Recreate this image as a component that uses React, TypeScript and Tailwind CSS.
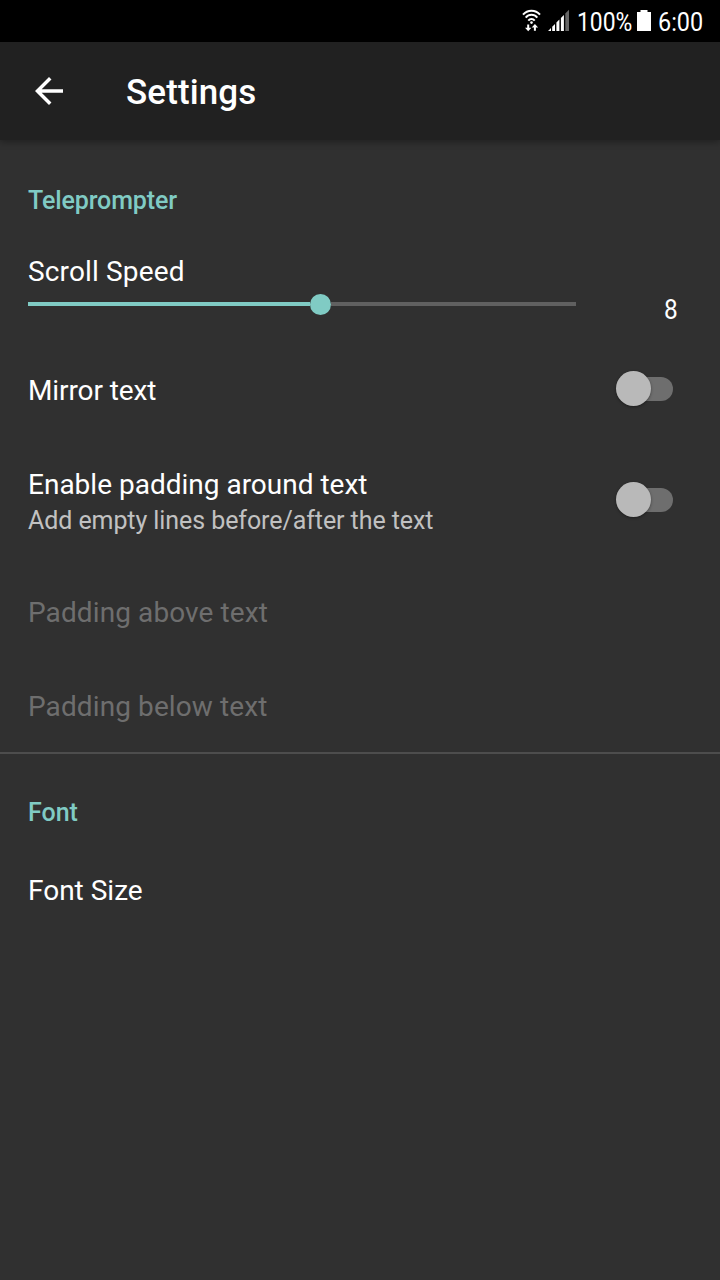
import React from "react";

function StatusBar() {
  return (
    <div className="flex h-[42px] shrink-0 items-center bg-black pl-[521px] text-[26px] leading-[42px] text-white">
      <svg width="50" height="42" viewBox="0 0 50 42" className="shrink-0">
        <g fill="none" stroke="#fff" strokeWidth="2">
          <path d="M2 14.6C6.5 9.4 14.5 9.4 19 14.6" />
          <path d="M4.7 17.6C7.9 13.8 13.1 13.8 16.3 17.6" />
          <path d="M7.3 20.6C9.2 18.3 11.8 18.3 13.7 20.6" />
        </g>
        <circle cx="10.5" cy="22.6" r="1.3" fill="#fff" />
        <path d="M6.2 24.5h2v3.2h2.2L7.2 31.2 4 27.7h2.2zM14.9 30.8v-3.2h2.2l-3.2-3.5-3.2 3.5h2.2v3.2z" fill="#fff" />
        <path d="M27 31l3-3v3zM31.2 31v-4.3l2.8-2.8V31zM35.4 31v-8.5l3-3V31zM39.9 31V18l3-3v16z" fill="#fff" />
        <path d="M44.3 31V13.6l3.7-3.8V31z" fill="#666" />
      </svg>
      <span className="ml-[6px] w-[55px] shrink-0"><span className="inline-block origin-left translate-y-px scale-x-[0.88]">100%</span></span>
      <svg width="14" height="42" viewBox="0 0 14 42" className="ml-[5px] shrink-0">
        <path d="M3.5 10h7v2H14v19H0V12h3.5z" fill="#fff" />
      </svg>
      <span className="ml-[7px] w-[50px] shrink-0"><span className="inline-block origin-left translate-y-px scale-x-[0.9]">6:00</span></span>
    </div>
  );
}

function Toggle() {
  return (
    <div className="relative mr-[47px] h-6 w-[52px] shrink-0 rounded-full bg-[#6e6e6e]">
      <div className="absolute -top-[6px] -left-[5px] size-[35px] rounded-full bg-[#b9b9b9] shadow-[0_1px_3px_rgba(0,0,0,0.4)]" />
    </div>
  );
}

function Row({ title, disabled = false, toggle = false }: { title: string; disabled?: boolean; toggle?: boolean }) {
  return (
    <div className={`flex h-[94px] items-center justify-between pl-7 ${disabled ? "tracking-[0.1px] text-[#6e6e6e]" : "text-white"}`}>
      <span className={`pt-[2px] ${toggle ? "tracking-[-0.1px]" : ""}`}>{title}</span>
      {toggle && <div className="-mt-[2px]"><Toggle /></div>}
    </div>
  );
}

export default function App() {
  return (
    <div className="flex h-[1280px] w-[720px] flex-col overflow-hidden bg-[#303030] font-['Roboto',sans-serif] text-[28px] leading-[34px] text-white">
      <StatusBar />
      <header className="flex h-[98px] shrink-0 items-center bg-[#212121] pl-[35px] shadow-[0_2px_7px_rgba(0,0,0,0.35)]">
        <svg width="28" height="28" viewBox="4 4 16 16" fill="#fff">
          <path d="M20 11H7.83l5.59-5.59L12 4l-8 8 8 8 1.41-1.41L7.83 13H20v-2z" />
        </svg>
        <h1 className="ml-[63px] pt-[4px] text-[35px] leading-[42px] font-medium tracking-[0.1px]">Settings</h1>
      </header>
      <main className="flex flex-col">
        <h2 className="mt-[44px] ml-7 h-[34px] text-[25px] font-medium tracking-[-0.12px] text-[#80cbc4]">Teleprompter</h2>
        <section className="flex h-[125px] pt-[37px] pl-7">
          <div className="flex w-[548px] flex-col">
            <span className="tracking-[0.15px]">Scroll Speed</span>
            <div className="mt-[5px] h-[21px]">
              <div className="flex items-start">
                <div className="mt-[8px] h-1 w-[282px] bg-[#80cbc4]" />
                <div className="size-[21px] rounded-full bg-[#80cbc4]" />
                <div className="mt-[8px] h-1 flex-1 bg-[#606060]" />
              </div>
            </div>
          </div>
          <span className="mt-[38px] ml-[88px] inline-block h-[34px] origin-left scale-x-[0.87]">8</span>
        </section>
        <Row title="Mirror text" toggle />
        <div className="flex h-[128px] items-center justify-between pl-7">
          <div className="flex flex-col pt-[4px]">
            <span className="h-[36px]">Enable padding around text</span>
            <span className="text-[25px] tracking-[-0.08px] text-[#c1c1c1]">Add empty lines before/after the text</span>
          </div>
          <div className="-mt-[2px]"><Toggle /></div>
        </div>
        <Row title="Padding above text" disabled />
        <Row title="Padding below text" disabled />
        <div className="-mt-px h-[2px] bg-[#4d4d4d]" />
        <h2 className="mt-[42px] ml-7 h-[47px] text-[25px] font-medium text-[#80cbc4]">Font</h2>
        <Row title="Font Size" />
      </main>
    </div>
  );
}
